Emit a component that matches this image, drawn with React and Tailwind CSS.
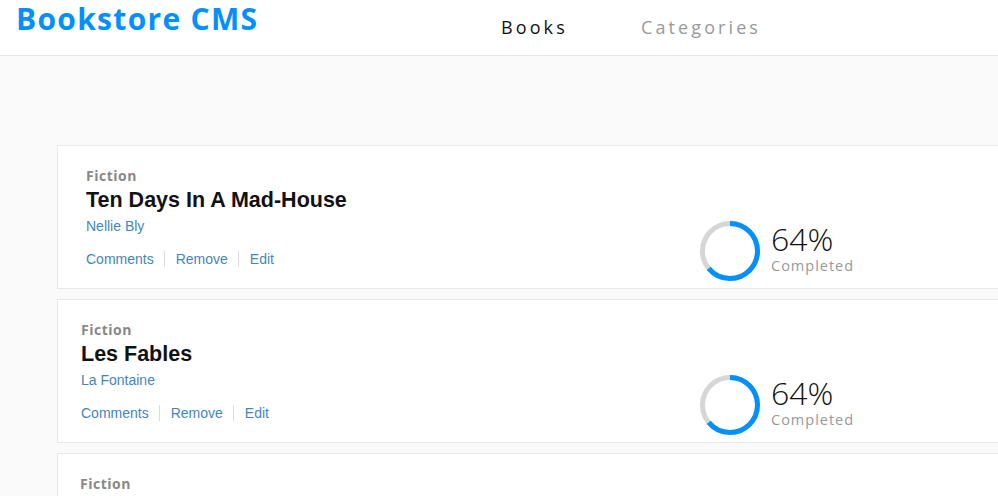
import React from "react";

const books = [
  { id: 1, category: "Fiction", title: "Ten Days In A Mad-House", author: "Nellie Bly", progress: 64, pad: "pl-[28px]" },
  { id: 2, category: "Fiction", title: "Les Fables", author: "La Fontaine", progress: 64, pad: "pl-[23px]" },
  { id: 3, category: "Fiction", title: "The Count of Monte Cristo", author: "Alexandre Dumas", progress: 64, pad: "pl-[22px]" },
];

const ProgressRing = ({ percent }) => {
  const r = 27.5;
  const c = 2 * Math.PI * r;
  return (
    <svg width="60" height="60" viewBox="0 0 60 60" className="shrink-0">
      <circle cx="30" cy="30" r={r} fill="none" stroke="#d6d6d6" strokeWidth="5" />
      <circle
        cx="30"
        cy="30"
        r={r}
        fill="none"
        stroke="#0290ff"
        strokeWidth="5"
        strokeDasharray={`${(c * percent) / 100} ${c}`}
        transform="rotate(-90 30 30)"
      />
    </svg>
  );
};

const BookCard = ({ book }) => (
  <div className="flex bg-white border border-[#e8e8e8] w-[1100px] h-[144px] shrink-0">
    {/* Book info */}
    <div className={`w-[642px] shrink-0 pt-[21px] ${book.pad}`}>
      <p className="font-['Open_Sans',sans-serif] font-bold text-[14px] leading-[18px] tracking-[0.5px] text-[#888]">
        {book.category}
      </p>
      <h2 className="mt-[3px] font-['Liberation_Sans',Arial,sans-serif] font-bold text-[21.5px] leading-[24px] text-[#121212]">
        {book.title}
      </h2>
      <p className="mt-[5px] font-['Liberation_Sans',Arial,sans-serif] text-[14px] leading-[18px] text-[#4386bf]">
        {book.author}
      </p>
      <div className="mt-[15px] flex items-center font-['Liberation_Sans',Arial,sans-serif] text-[14px] leading-[18px] text-[#4386bf]">
        <button>Comments</button>
        <span className="ml-[10px] mr-[11px] w-px h-[16px] bg-[#e0d8e8]" />
        <button>Remove</button>
        <span className="ml-[10px] mr-[11px] w-px h-[16px] bg-[#e0d8e8]" />
        <button>Edit</button>
      </div>
    </div>

    {/* Progress */}
    <div className="pt-[75px] flex items-start">
      <ProgressRing percent={book.progress} />
      <div className="ml-[11px] font-['Open_Sans',sans-serif]">
        <p className="text-[32px] font-light leading-[36px] text-[#121212]">{book.progress}%</p>
        <p className="text-[14.5px] leading-[18px] tracking-[1px] text-[#999]">Completed</p>
      </div>
    </div>
  </div>
);

const App = () => {
  return (
    <div className="min-h-screen h-[496px] overflow-hidden bg-[#fafafa]">
      <header className="h-[56px] flex items-start bg-white border-b border-[#e8e8e8]">
        <div className="w-[501px] shrink-0 pl-[16px]">
          <h1 className="font-['Open_Sans',sans-serif] font-bold text-[30px] leading-[38px] tracking-[1.3px] text-[#0290ff]">
            Bookstore CMS
          </h1>
        </div>
        <nav className="flex pt-[14px] font-['Open_Sans',sans-serif] text-[18px] leading-[26px] tracking-[3.1px]">
          <a className="w-[140px] text-[#121212]" href="#">Books</a>
          <a className="w-[140px] text-[#999]" href="#">Categories</a>
        </nav>
      </header>

      <main className="pt-[89px] pl-[57px] flex flex-col gap-[10px]">
        {books.map((book) => (
          <BookCard key={book.id} book={book} />
        ))}
      </main>
    </div>
  );
};

export default App;
